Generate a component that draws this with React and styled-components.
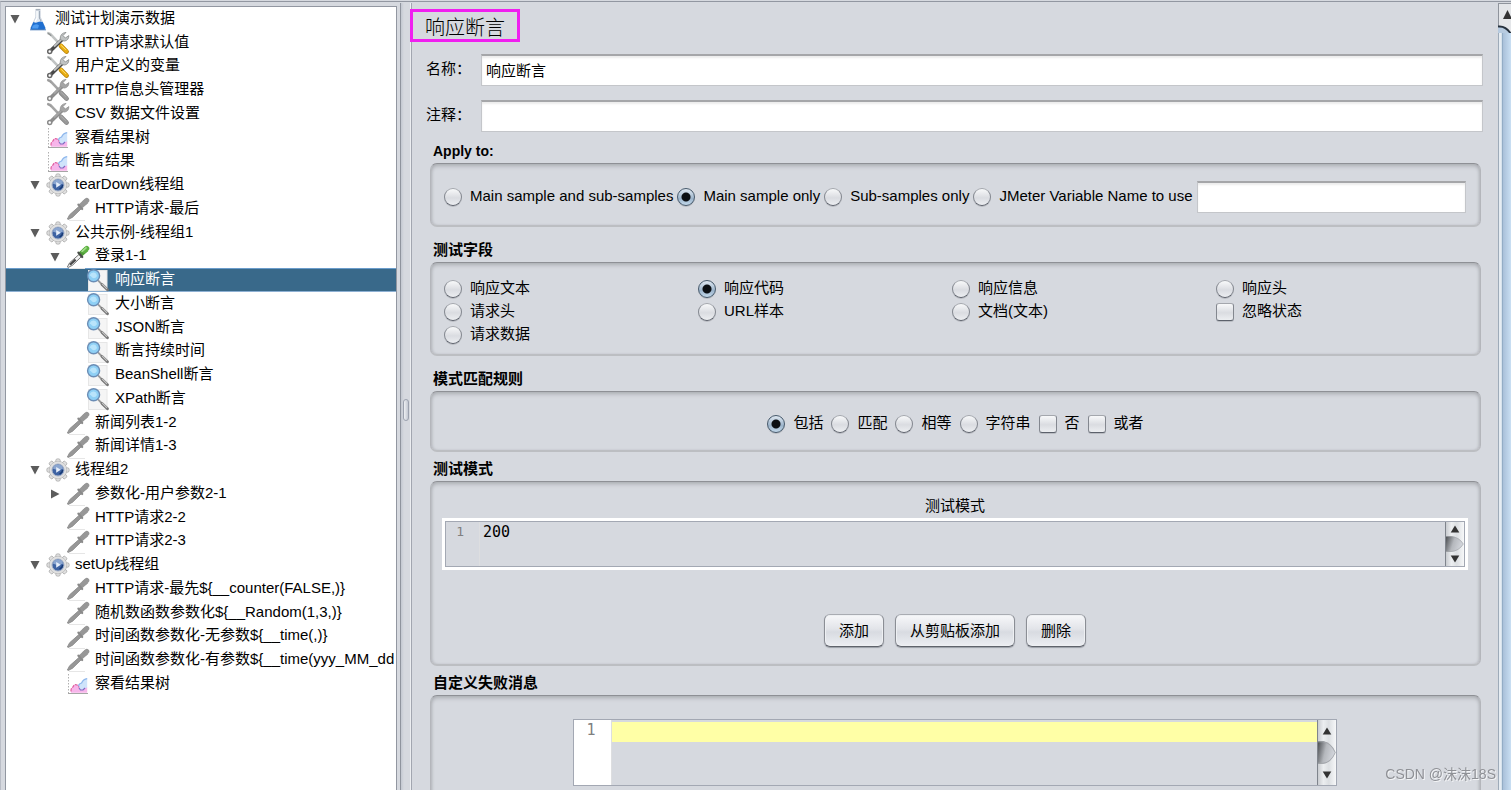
import React from "react";
import styled, { createGlobalStyle, css } from "styled-components";

const GlobalStyle = createGlobalStyle`
  *, *::before, *::after { box-sizing: border-box; }
  html, body { margin: 0; height: 100%; overflow: hidden; }
  body, input, button, textarea {
    font-family: "Liberation Sans", "Noto Sans CJK SC", sans-serif;
    font-size: 15px;
    color: #000;
  }
  body { background: #d6d9df; }
`;

/* ---------- window ---------- */

const Window = styled.div`
  display: flex;
  height: 100vh;
  overflow: hidden;
  padding-top: 1px;
`;

const Frame = styled.div`
  display: flex;
  flex: 1;
  min-width: 0;
  border-top: 1px solid #9297a1;
  border-left: 1px solid #b9bdc6;
`;

const TreePane = styled.nav`
  flex: 0 0 392px;
  margin: 4px 3px 0 4px;
  background: #fff;
  border: 1px solid #9297a1;
  border-bottom: 0;
  overflow: hidden;
`;

const Divider = styled.div`
  flex: 0 0 12px;
  display: flex;
  align-items: center;
  justify-content: center;
  margin-top: 1px;
  padding-top: 26px;
  background: linear-gradient(90deg, #c3c8d1, #d6d9df 3px);
  border-left: 1px solid #8f949e;
  border-right: 1px solid #a2a6b0;
  box-shadow: inset -1px 0 0 #eceef1;
`;

const Grip = styled.span`
  width: 6px;
  height: 22px;
  border: 1px solid #9ba1ae;
  border-radius: 3px;
  background: linear-gradient(90deg, #eef0f3, #c3c8d2);
`;

/* ---------- tree ---------- */

const TreeList = styled.ul`
  list-style: none;
  margin: 0;
  padding: 0;
`;

const TreeRow = styled.li`
  display: flex;
  align-items: center;
  height: 24px;
  padding-left: ${(p) => p.$depth * 20}px;
  white-space: nowrap;
  &:nth-child(4n + 3) { height: 23px; }
  ${(p) =>
    p.$selected &&
    css`
      color: #fff;
      background: #39698a;
      box-shadow: inset 0 1px 0 #6a9ccb, inset 0 -1px 0 #8db0d3;
    `}
`;

const Toggle = styled.span`
  display: flex;
  justify-content: center;
  flex: 0 0 20px;
  padding-right: 2px;
`;

const IconSlot = styled.span`
  display: flex;
  justify-content: center;
  flex: 0 0 24px;
  margin-right: 5px;
`;

const Caption = styled.span`
  line-height: 20px;
  padding-bottom: 3px;
`;

const Svg = styled.svg`
  display: block;
  flex: none;
`;

function Arrow({ open }) {
  return (
    <Svg width="10" height="10" viewBox="0 0 10 10" aria-hidden="true">
      <path d={open ? "M0.5 1H9.5L5 9.5Z" : "M1 0.5L9.5 5L1 9.5Z"} fill="#5c5c5c" />
    </Svg>
  );
}

function Flask() {
  return (
    <Svg width="24" height="24" viewBox="0 0 24 24">
      <path d="M9.8 3.5V10L5 20.5Q4 22.5 6 22.5H18Q20 22.5 19 20.5L14.2 10V3.5Z" fill="#e3eaf2" stroke="#c3ccd7" strokeWidth="0.8" />
      <path d="M7.4 15Q10 16.4 12 15Q14.5 13.8 16.7 15L19.3 20.7Q19.6 22.4 18 22.4H6Q4.3 22.4 4.7 20.7Z" fill="#1f6fd0" />
      <path d="M6.6 18.8Q10 16 13 18.4L12 21.5H6Z" fill="#4d9bf0" />
      <path d="M9.6 2.5H14.4" stroke="#a7b0bb" strokeWidth="1.2" />
      <path d="M13.4 4V11L15 14" stroke="#9aa5b3" strokeWidth="1" fill="none" />
      <path d="M11 4V11L9 14.6" stroke="#fff" strokeWidth="1.2" fill="none" />
      <path d="M4 22.8H20" stroke="#1b5cab" strokeWidth="0.8" />
    </Svg>
  );
}

function Tools({ muted }) {
  const dark = muted ? "#8d8d8d" : "#4a4a4a";
  const light = muted ? "#a5a5a5" : "#c0c3c3";
  const handle = muted ? "#999" : "#e9ae13";
  return (
    <Svg width="24" height="24" viewBox="0 0 24 24">
      <path d="M2.2 2.2L4.4 3L13.2 12.4" fill="none" stroke={light} strokeWidth="2.6" strokeLinecap="round" />
      <path d="M2.2 2.2L5.2 4.8" stroke={muted ? "#9b9b9b" : "#8b8f8f"} strokeWidth="1.2" />
      <path d="M15 15L20.6 20.6" stroke={muted ? "#858585" : "#b8830d"} strokeWidth="4.6" strokeLinecap="round" />
      <path d="M14.8 14.4L20.4 20.2" stroke={handle} strokeWidth="3.4" strokeLinecap="round" />
      <path d="M15.2 14.4L19.8 18.8" stroke={muted ? "#adadad" : "#ffe070"} strokeWidth="1" />
      <path d="M4.6 19.8L16.4 8.2" stroke={dark} strokeWidth="3.6" />
      <path d="M8 15.6L16.4 7.6" stroke={light} strokeWidth="2" />
      <path d="M20 1.4L17 4.6L19.4 7L22.8 4.6Q22.8 9.4 18.6 10L15.8 9.6L14.2 7.8Q14 2.2 20 1.4Z" fill={light} stroke={muted ? "#8f8f8f" : "#858888"} strokeWidth="0.8" />
      <circle cx="3.7" cy="20.6" r="2" fill="#fff" stroke={muted ? "#8a8a8a" : "#666"} strokeWidth="1.5" />
    </Svg>
  );
}

function Chart() {
  return (
    <Svg width="24" height="24" viewBox="0 0 24 24">
      <path d="M2.5 2V21.5" stroke="#b0b0b0" strokeWidth="1" strokeDasharray="1.5 1.5" />
      <path d="M2 21.5H22" stroke="#a6a6a6" strokeWidth="1" />
      <path d="M12.5 16V13Q13.5 10.5 15.5 10.5Q17 7 21.2 6.4V16Q19 18 15.5 17.5Z" fill="#cfe4fb" />
      <path d="M12.6 15.5Q12 12 15.6 11Q17 7.2 21.2 6.6" fill="none" stroke="#8db6ec" strokeWidth="1.2" />
      <path d="M5 20.8V18Q5.5 15.5 7 15Q8.5 11.6 11 13Q13.5 14.5 14 17.6H17.5Q19.5 15.5 21.2 15.6V20.8Z" fill="#f7b5ea" />
      <path d="M5 19.5V18Q5.5 15.5 7 15Q8.5 11.6 11 13Q12.5 14 13 15.5" fill="none" stroke="#e0609f" strokeWidth="1.2" strokeDasharray="3 1" />
      <path d="M13 16L14.5 18H17L19 16" fill="none" stroke="#7c6cc4" strokeWidth="1.2" />
    </Svg>
  );
}

function Gear() {
  const teeth = [0, 45, 90, 135, 180, 225, 270, 315];
  return (
    <Svg width="24" height="24" viewBox="0 0 24 24">
      {teeth.map((a) => (
        <rect key={a} x="9.8" y="0.9" width="4.4" height="6" rx="1.6" fill="#e2e2e2" stroke="#a6a6a6" strokeWidth="0.8" transform={`rotate(${a} 12 12)`} />
      ))}
      <circle cx="12" cy="12" r="8.8" fill="#e0e0e0" stroke="#b0b0b0" strokeWidth="0.6" />
      <circle cx="12" cy="12" r="8" fill="#e0e0e0" />
      <circle cx="12" cy="12" r="6" fill="#3e63a3" stroke="#a4b0c6" strokeWidth="1" />
      <path d="M6.8 10.5A5.4 5.4 0 0 1 17.2 10.5Q12 13 6.8 10.5Z" fill="#8ba6d0" />
      <path d="M10.2 9L14.8 11.8L10.2 14.8Z" fill="#e6eefa" />
      <path d="M13.5 15.8Q16.3 14.8 16.6 12" stroke="#183a73" strokeWidth="1.4" fill="none" />
    </Svg>
  );
}

function Dropper({ active }) {
  const g = "#979797";
  return (
    <Svg width="24" height="24" viewBox="0 0 24 24">
      <path d="M3 23.5H19" stroke="#e6e6e6" strokeWidth="1" />
      <path d="M1.4 22L3.6 17.8L13.5 9L15.6 11.4L6.6 20.2L2.4 22.4Z" fill={active ? "#f3f3f3" : g} stroke={active ? "#666" : "#8c8c8c"} strokeWidth="0.9" />
      <path d="M4 19.8L9.6 14.6" stroke={active ? "#4a4a4a" : g} strokeWidth="2.2" />
      <path d="M13.4 10.2L20.6 4" stroke={active ? "#4f9d38" : g} strokeWidth="5.2" />
      <path d="M18.4 5.6L20.8 3.4" stroke={active ? "#5fb344" : g} strokeWidth="5" strokeLinecap="round" />
      {active && <path d="M16 6.4L20 2.8" stroke="#a4dc8d" strokeWidth="1.6" strokeLinecap="round" />}
      <path d="M12.4 7.6L16.2 12" stroke={active ? "#4a4a4a" : "#8a8a8a"} strokeWidth="2.2" strokeLinecap="round" />
    </Svg>
  );
}

function Magnifier() {
  return (
    <Svg width="24" height="24" viewBox="0 0 24 24">
      <rect x="2.5" y="2.5" width="18.5" height="20" fill="#f5f5f5" stroke="#e6e6e6" />
      <path d="M12 12.4L16 16.5" stroke="#9a9a9a" strokeWidth="1.8" />
      <path d="M16 16.4L21.5 21.8" stroke="#777" strokeWidth="2.8" strokeLinecap="round" />
      <path d="M16 15.9L21 20.8" stroke="#c9c9c9" strokeWidth="1.1" />
      <circle cx="7.6" cy="7.8" r="6" fill="#8fd0f5" stroke="#6b8db5" strokeWidth="1.4" />
      <path d="M3.6 7.6Q5 4 8 4.6Q10.6 5 11 8Q9 11.4 6 9.6Q5 8 3.6 7.6Z" fill="#b9e4fb" />
    </Svg>
  );
}

const icons = {
  flask: <Flask />,
  tools: <Tools />,
  toolsMuted: <Tools muted />,
  chart: <Chart />,
  gear: <Gear />,
  dropper: <Dropper />,
  dropperActive: <Dropper active />,
  magnifier: <Magnifier />,
};

const nodes = [
  { depth: 0, icon: "flask", text: "测试计划演示数据", open: true },
  { depth: 1, icon: "tools", text: "HTTP请求默认值" },
  { depth: 1, icon: "tools", text: "用户定义的变量" },
  { depth: 1, icon: "toolsMuted", text: "HTTP信息头管理器" },
  { depth: 1, icon: "toolsMuted", text: "CSV 数据文件设置" },
  { depth: 1, icon: "chart", text: "察看结果树" },
  { depth: 1, icon: "chart", text: "断言结果" },
  { depth: 1, icon: "gear", text: "tearDown线程组", open: true },
  { depth: 2, icon: "dropper", text: "HTTP请求-最后" },
  { depth: 1, icon: "gear", text: "公共示例-线程组1", open: true },
  { depth: 2, icon: "dropperActive", text: "登录1-1", open: true },
  { depth: 3, icon: "magnifier", text: "响应断言", selected: true },
  { depth: 3, icon: "magnifier", text: "大小断言" },
  { depth: 3, icon: "magnifier", text: "JSON断言" },
  { depth: 3, icon: "magnifier", text: "断言持续时间" },
  { depth: 3, icon: "magnifier", text: "BeanShell断言" },
  { depth: 3, icon: "magnifier", text: "XPath断言" },
  { depth: 2, icon: "dropper", text: "新闻列表1-2" },
  { depth: 2, icon: "dropper", text: "新闻详情1-3" },
  { depth: 1, icon: "gear", text: "线程组2", open: true },
  { depth: 2, icon: "dropper", text: "参数化-用户参数2-1", open: false },
  { depth: 2, icon: "dropper", text: "HTTP请求2-2" },
  { depth: 2, icon: "dropper", text: "HTTP请求2-3" },
  { depth: 1, icon: "gear", text: "setUp线程组", open: true },
  { depth: 2, icon: "dropper", text: "HTTP请求-最先${__counter(FALSE,)}" },
  { depth: 2, icon: "dropper", text: "随机数函数参数化${__Random(1,3,)}" },
  { depth: 2, icon: "dropper", text: "时间函数参数化-无参数${__time(,)}" },
  { depth: 2, icon: "dropper", text: "时间函数参数化-有参数${__time(yyy_MM_dd H" },
  { depth: 2, icon: "chart", text: "察看结果树" },
];

/* ---------- form ---------- */

const Content = styled.main`
  flex: 1;
  min-width: 0;
  padding: 7px 15px 0 14px;
`;

const Title = styled.h1`
  position: relative;
  width: 110px;
  height: 33px;
  margin: 0 0 12px -16px;
  padding: 0 0 0 12px;
  border: 3px solid #f01ff0;
  font-size: 20px;
  font-weight: 300;
  line-height: 32px;
  color: #000;
`;

const Field = styled.div`
  display: grid;
  grid-template-columns: 55px 1fr;
  align-items: center;
  margin-bottom: ${(p) => (p.$last ? 7 : 14)}px;
`;

const FieldLabel = styled.label`
  line-height: 20px;
  padding-bottom: 3px;
`;

const TextInput = styled.input`
  width: 100%;
  min-width: 0;
  height: 32px;
  padding: 0 4px 3px;
  background: #fff;
  border: 1px solid #c4c6ca;
  border-top: 2px solid #a5a6a9;
  box-shadow: inset 0 2px 2px #ececec;
  outline: 0;
`;

const Section = styled.section`
  margin: ${(p) => (p.$tight ? 5 : p.$first ? 0 : 11)}px 2px 0 4px;
`;

const SectionTitle = styled.h2`
  margin: 0;
  padding-left: 3px;
  font-size: ${(p) => (p.$latin ? 14 : 15)}px;
  font-weight: 700;
  line-height: 24px;
`;

const Box = styled.div`
  min-height: ${(p) => p.$height}px;
  padding: ${(p) => p.$pad};
  border: 1px solid #b4b6bb;
  border-top-color: #8e9095;
  border-bottom: 2px solid #bcbec2;
  border-radius: 7px;
  box-shadow: inset 0 3px 4px -1px #aaadb2, inset 2px 0 3px -1px #b9bbc0, inset -2px 0 3px -1px #b9bbc0;
`;

const OptionRow = styled.div`
  display: flex;
  align-items: center;
  justify-content: ${(p) => (p.$center ? "center" : "flex-start")};
  gap: ${(p) => (p.$center ? 8 : 4)}px;
`;

const OptionGrid = styled.div`
  display: grid;
  grid-template-columns: 127fr 127fr 132fr 125fr;
  grid-auto-rows: 23px;
`;

const OptionLabel = styled.label`
  display: flex;
  align-items: center;
  gap: 8px;
  white-space: nowrap;
`;

const Mark = styled.input`
  appearance: none;
  flex: none;
  width: 18px;
  height: 18px;
  margin: 0;
  border: 1px solid #83878f;
  border-top-color: #a4a7ad;
  border-bottom-color: #5c616b;
  border-radius: ${(p) => (p.type === "radio" ? "50%" : "3px")};
  background: linear-gradient(#f8f9fa, #dadce1 55%, #eceef1);
  box-shadow: 0 1px 0 #b9bcc2;
  &:checked {
    border-color: #46596b;
    background:
      radial-gradient(circle at center, #0b0f13 4px, transparent 5px),
      linear-gradient(#dfe8f1, #9cb4cb 60%, #c2d8ea);
  }
`;

const OptionText = styled.span`
  line-height: 20px;
  padding-bottom: 2px;
`;

function Option({ type = "radio", name, text, checked }) {
  return (
    <OptionLabel>
      <Mark type={type} name={name} defaultChecked={checked} />
      <OptionText>{text}</OptionText>
    </OptionLabel>
  );
}

/* ---------- editors ---------- */

const TableHead = styled.div`
  text-align: center;
  line-height: 24px;
`;

const Cell = styled.div`
  padding: 3px;
  background: #fff;
`;

const Editor = styled.div`
  display: flex;
  height: ${(p) => (p.$boxed ? 67 : 46)}px;
  max-width: ${(p) => (p.$boxed ? "764px" : "none")};
  margin: 0 auto;
  border: 1px solid #a3a8b3;
  background: #d6d9df;
`;

const Gutter = styled.div`
  flex: 0 0 ${(p) => (p.$boxed ? 38 : 34)}px;
  padding-right: 15px;
  text-align: right;
  font: ${(p) => (p.$boxed ? 15 : 13)}px/20px "DejaVu Sans Mono", monospace;
  color: #808080;
  background: ${(p) => (p.$boxed ? "#fff" : "transparent")};
  border-right: 1px solid #dddee0;
`;

const Code = styled.textarea`
  flex: 1;
  min-width: 0;
  margin: 0;
  padding: 0 3px;
  border: 0;
  outline: 0;
  resize: none;
  overflow: hidden;
  font: 15px/21px "DejaVu Sans Mono", monospace;
  background: ${(p) =>
    p.$boxed
      ? "linear-gradient(#ffffa6, #ffffa6) 0 2px / 100% 20px no-repeat"
      : "transparent"};
`;

const ScrollTrack = styled.div`
  display: flex;
  flex-direction: column;
  align-items: stretch;
  flex: 0 0 19px;
  border-left: 1px solid #7f848c;
  background: linear-gradient(90deg, #c9ccd0, #eceef0 30%, #dcdfe2 60%, #f7f8f9);
`;

const ScrollButton = styled.button`
  display: flex;
  align-items: center;
  justify-content: center;
  flex: 1;
  padding: 0;
  border: 0;
  background: transparent;
`;

function ScrollBar({ thumb }) {
  const id = `thumb-${thumb}`;
  return (
    <ScrollTrack>
      <ScrollButton aria-label="向上">
        <Svg width="10" height="8" viewBox="0 0 10 8"><path d="M5 0.5L9.3 7.5H0.7Z" fill="#333" /></Svg>
      </ScrollButton>
      <Svg width="18" height={thumb} viewBox="0 0 18 16" preserveAspectRatio="none">
        <defs>
          <linearGradient id={id} x1="0" x2="1" y1="0.2" y2="0.5">
            <stop offset="0" stopColor="#55585c" />
            <stop offset="0.45" stopColor="#b5b8bd" />
            <stop offset="1" stopColor="#d6d9df" />
          </linearGradient>
        </defs>
        <path d="M0 0H5Q13 1 17.5 8Q13 15 5 16H0Z" fill={`url(#${id})`} />
        <path d="M0 0.5H5Q13 1 17.3 8Q13 15 5 15.5H0" fill="none" stroke="#a3a6ab" strokeWidth="0.7" />
      </Svg>
      <ScrollButton aria-label="向下">
        <Svg width="10" height="8" viewBox="0 0 10 8"><path d="M0.7 0.5H9.3L5 7.5Z" fill="#333" /></Svg>
      </ScrollButton>
    </ScrollTrack>
  );
}

const ButtonRow = styled.div`
  display: flex;
  justify-content: center;
  gap: 11px;
  margin-top: 44px;
`;

const PushButton = styled.button`
  height: 33px;
  padding: 0 14px 3px;
  border: 1px solid #8b8e95;
  border-top-color: #a9acb2;
  border-bottom-color: #5f636b;
  border-radius: 6px;
  background: linear-gradient(#f7f8fa, #e2e4e9 45%, #d8dbe1 55%, #eceef2);
  box-shadow: 0 1px 1px #9a9ea6, inset 0 0 0 1px #eef0f3;
`;

/* ---------- page scroll bar ---------- */

const PageScroll = styled.div`
  display: flex;
  flex-direction: column;
  flex: 0 0 13px;
  margin-top: 1px;
  overflow: hidden;
`;

const PageThumb = styled.div`
  flex: 1;
  background: linear-gradient(90deg, #9eabb9 0 1px, #e6edf3 1px 3px, #d6e2ec 3px 4px, #93adc6 4px 5px, #a9c0d9 5px, #c9dff3 13px);
`;

const Watermark = styled.div`
  position: fixed;
  right: 15px;
  bottom: 6px;
  font-size: 14px;
  line-height: 20px;
  color: #8f9196;
  text-shadow: 1px 1px 0 #f4f5f7;
  pointer-events: none;
`;

export default function App() {
  return (
    <Window>
      <GlobalStyle />
      <Frame>
        <TreePane>
          <TreeList role="tree">
            {nodes.map((n, i) => (
              <TreeRow key={i} role="treeitem" aria-level={n.depth + 1} aria-selected={!!n.selected} $depth={n.depth} $selected={n.selected}>
                <Toggle>{n.open !== undefined && <Arrow open={n.open} />}</Toggle>
                <IconSlot>{icons[n.icon]}</IconSlot>
                <Caption>{n.text}</Caption>
              </TreeRow>
            ))}
          </TreeList>
        </TreePane>
        <Divider role="separator" aria-orientation="vertical">
          <Grip />
        </Divider>

        <Content>
          <Title>响应断言</Title>
          <Field>
            <FieldLabel htmlFor="name">名称：</FieldLabel>
            <TextInput id="name" defaultValue="响应断言" />
          </Field>
          <Field $last>
            <FieldLabel htmlFor="comment">注释：</FieldLabel>
            <TextInput id="comment" />
          </Field>

          <Section $first>
            <SectionTitle $latin>Apply to:</SectionTitle>
            <Box $height={64} $pad="17px 14px 12px 13px">
              <OptionRow>
                <Option name="scope" text="Main sample and sub-samples" />
                <Option name="scope" text="Main sample only" checked />
                <Option name="scope" text="Sub-samples only" />
                <Option name="scope" text="JMeter Variable Name to use" />
                <TextInput aria-label="JMeter Variable Name to use" />
              </OptionRow>
            </Box>
          </Section>

          <Section>
            <SectionTitle>测试字段</SectionTitle>
            <Box $height={94} $pad="14px 14px 8px 13px">
              <OptionGrid>
                <Option name="field" text="响应文本" />
                <Option name="field" text="响应代码" checked />
                <Option name="field" text="响应信息" />
                <Option name="field" text="响应头" />
                <Option name="field" text="请求头" />
                <Option name="field" text="URL样本" />
                <Option name="field" text="文档(文本)" />
                <Option type="checkbox" name="ignoreStatus" text="忽略状态" />
                <Option name="field" text="请求数据" />
              </OptionGrid>
            </Box>
          </Section>

          <Section>
            <SectionTitle>模式匹配规则</SectionTitle>
            <Box $height={61} $pad="21px 14px 14px">
              <OptionRow $center>
                <Option name="rule" text="包括" checked />
                <Option name="rule" text="匹配" />
                <Option name="rule" text="相等" />
                <Option name="rule" text="字符串" />
                <Option type="checkbox" name="not" text="否" />
                <Option type="checkbox" name="or" text="或者" />
              </OptionRow>
            </Box>
          </Section>

          <Section $tight>
            <SectionTitle>测试模式</SectionTitle>
            <Box $height={185} $pad="12px 12px 16px 11px">
              <TableHead>测试模式</TableHead>
              <Cell>
                <Editor>
                  <Gutter>1</Gutter>
                  <Code aria-label="测试模式" defaultValue="200" />
                  <ScrollBar thumb={16} />
                </Editor>
              </Cell>
              <ButtonRow>
                <PushButton>添加</PushButton>
                <PushButton>从剪贴板添加</PushButton>
                <PushButton>删除</PushButton>
              </ButtonRow>
            </Box>
          </Section>

          <Section $tight>
            <SectionTitle>自定义失败消息</SectionTitle>
            <Box $height={120} $pad="23px 15px 23px 13px">
              <Editor $boxed>
                <Gutter $boxed>1</Gutter>
                <Code $boxed aria-label="自定义失败消息" />
                <ScrollBar thumb={23} />
              </Editor>
            </Box>
          </Section>
        </Content>

        <PageScroll>
          <Svg width="20" height="30" viewBox="0 0 20 30">
            <rect width="20" height="30" fill="#e4e6e9" />
            <path d="M0 0.5H20M0.5 0V30" stroke="#8f949c" />
            <path d="M9.5 7L14 16H5Z" fill="#333" />
            <path d="M0 23Q8 22 13 31H0Z" fill="#b7cbe0" />
            <path d="M0 23.5Q8 22.5 13 31" fill="none" stroke="#26313d" strokeWidth="2" />
          </Svg>
          <PageThumb />
        </PageScroll>
      </Frame>
      <Watermark>CSDN @沫沫18S</Watermark>
    </Window>
  );
}
